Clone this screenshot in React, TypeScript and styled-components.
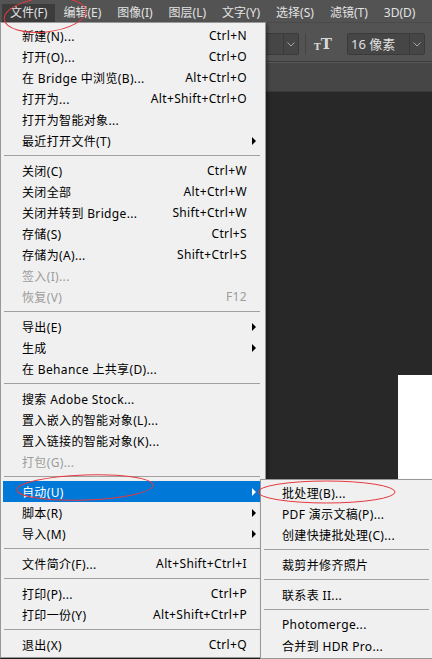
import React from "react";
import styled, { createGlobalStyle } from "styled-components";

const Global = createGlobalStyle`
  html, body { margin: 0; padding: 0; background: #282828; }
  #root { width: 432px; height: 659px; }
`;

const FONT = `"Segoe UI", "Noto Sans", "Noto Sans CJK SC", sans-serif`;

const Frame = styled.div`
  position: relative;
  width: 432px;
  height: 659px;
  overflow: hidden;
  display: flex;
  flex-direction: column;
  background: #282828;
  font-family: ${FONT};
`;

const MenuBar = styled.div`
  height: 22px;
  flex: none;
  background: #535353;
  display: flex;
  align-items: flex-end;
  padding-left: 2px;
  box-sizing: border-box;
`;

const BarItem = styled.div<{ $active?: boolean }>`
  height: 18px;
  padding: 0 8px;
  line-height: 18px;
  font-size: 12px;
  color: #e2e2e2;
  white-space: nowrap;
  background: ${(p) => (p.$active ? "#3c3c3c" : "transparent")};
`;

const Toolbar = styled.div`
  height: 40px;
  flex: none;
  box-sizing: border-box;
  background: #535353;
  border-top: 1px solid #4a4a4a;
  border-bottom: 1px solid #3a3a3a;
  display: flex;
  align-items: flex-start;
  padding: 10px 0 0 200px;
`;

const Select = styled.div<{ $w: number; $gap?: number }>`
  width: ${(p) => p.$w}px;
  margin-left: ${(p) => p.$gap ?? 0}px;
  height: 22px;
  box-sizing: border-box;
  flex: none;
  display: flex;
  background: #464646;
  border: 1px solid #3a3a3a;
  border-radius: 2px;
  color: #e0e0e0;
  font-size: 13px;
`;

const SelectValue = styled.div`
  flex: 1;
  padding-left: 3px;
  line-height: 20px;
  white-space: nowrap;
`;

const SelectArrow = styled.div`
  width: 14px;
  border-left: 1px solid #3a3a3a;
  display: flex;
  align-items: center;
  justify-content: center;
  color: #a8a8a8;
`;

const VSep = styled.div`
  width: 1px;
  height: 22px;
  margin-left: 6px;
  background: #434343;
  flex: none;
`;

const TextOrient = styled.div`
  margin-left: 6px;
  width: 22px;
  height: 22px;
  display: flex;
  align-items: flex-end;
  justify-content: center;
  padding-bottom: 3px;
  box-sizing: border-box;
  font-family: "DejaVu Serif", "Liberation Serif", serif;
  color: #d8d8d8;
  font-weight: bold;
  line-height: 1;
  flex: none;
`;

const Small = styled.span`
  font-size: 9px;
`;
const Big = styled.span`
  font-size: 15px;
`;

const Dots = styled.div`
  margin-left: 11px;
  margin-top: 5px;
  width: 2px;
  height: 12px;
  background: repeating-linear-gradient(#bdbdbd 0 2px, transparent 2px 4px);
  flex: none;
`;

const TabBar = styled.div`
  height: 30px;
  flex: none;
  box-sizing: border-box;
  background: #464646;
  border-top: 1px solid #5a5a5a;
  border-bottom: 1px solid #383838;
`;

const Canvas = styled.div`
  flex: 1;
  display: flex;
  justify-content: flex-end;
  align-items: flex-end;
`;

const Doc = styled.div`
  width: 34px;
  height: 284px;
  background: #ffffff;
`;

const Menu = styled.div<{ $left: number; $top: number; $width: number }>`
  position: absolute;
  left: ${(p) => p.$left}px;
  top: ${(p) => p.$top}px;
  width: ${(p) => p.$width}px;
  box-sizing: border-box;
  background: #f0f0f0;
  border: 1px solid #979797;
  padding: 2px 4px 2px 2px;
  box-shadow: 2px 2px 3px rgba(0, 0, 0, 0.35);
`;

const Row = styled.div<{ $active?: boolean; $disabled?: boolean }>`
  height: 21px;
  display: grid;
  grid-template-columns: 1fr auto 14px;
  align-items: center;
  padding-left: 19px;
  font-size: 12px;
  letter-spacing: 0.35px;
  white-space: nowrap;
  color: ${(p) => (p.$active ? "#ffffff" : p.$disabled ? "#9c9c9c" : "#000000")};
  background: ${(p) => (p.$active ? "#0078d7" : "transparent")};
`;

const Shortcut = styled.span`
  text-align: right;
`;

const Arrow = styled.span`
  justify-self: center;
  width: 0;
  height: 0;
  border-top: 4px solid transparent;
  border-bottom: 4px solid transparent;
  border-left: 4px solid currentColor;
`;

const Sep = styled.div`
  height: 9px;
  display: flex;
  align-items: center;
  padding: 0 1px;
  &::after {
    content: "";
    flex: 1;
    height: 1px;
    background: #a0a0a0;
  }
`;

const Overlay = styled.svg`
  position: absolute;
  left: 0;
  top: 0;
  pointer-events: none;
`;

type Item =
  | { sep: true }
  | { label: string; key?: string; sub?: boolean; disabled?: boolean; active?: boolean };

const fileMenu: Item[] = [
  { label: "新建(N)...", key: "Ctrl+N" },
  { label: "打开(O)...", key: "Ctrl+O" },
  { label: "在 Bridge 中浏览(B)...", key: "Alt+Ctrl+O" },
  { label: "打开为...", key: "Alt+Shift+Ctrl+O" },
  { label: "打开为智能对象..." },
  { label: "最近打开文件(T)", sub: true },
  { sep: true },
  { label: "关闭(C)", key: "Ctrl+W" },
  { label: "关闭全部", key: "Alt+Ctrl+W" },
  { label: "关闭并转到 Bridge...", key: "Shift+Ctrl+W" },
  { label: "存储(S)", key: "Ctrl+S" },
  { label: "存储为(A)...", key: "Shift+Ctrl+S" },
  { label: "签入(I)...", disabled: true },
  { label: "恢复(V)", key: "F12", disabled: true },
  { sep: true },
  { label: "导出(E)", sub: true },
  { label: "生成", sub: true },
  { label: "在 Behance 上共享(D)..." },
  { sep: true },
  { label: "搜索 Adobe Stock..." },
  { label: "置入嵌入的智能对象(L)..." },
  { label: "置入链接的智能对象(K)..." },
  { label: "打包(G)...", disabled: true },
  { sep: true },
  { label: "自动(U)", sub: true, active: true },
  { label: "脚本(R)", sub: true },
  { label: "导入(M)", sub: true },
  { sep: true },
  { label: "文件简介(F)...", key: "Alt+Shift+Ctrl+I" },
  { sep: true },
  { label: "打印(P)...", key: "Ctrl+P" },
  { label: "打印一份(Y)", key: "Alt+Shift+Ctrl+P" },
  { sep: true },
  { label: "退出(X)", key: "Ctrl+Q" },
];

const autoMenu: Item[] = [
  { label: "批处理(B)..." },
  { label: "PDF 演示文稿(P)..." },
  { label: "创建快捷批处理(C)..." },
  { sep: true },
  { label: "裁剪并修齐照片" },
  { sep: true },
  { label: "联系表 II..." },
  { sep: true },
  { label: "Photomerge..." },
  { label: "合并到 HDR Pro..." },
];

const barItems = ["文件(F)", "编辑(E)", "图像(I)", "图层(L)", "文字(Y)", "选择(S)", "滤镜(T)", "3D(D)"];

function MenuItems({ items }: { items: Item[] }) {
  return (
    <>
      {items.map((it, i) =>
        "sep" in it ? (
          <Sep key={i} />
        ) : (
          <Row key={i} $active={it.active} $disabled={it.disabled}>
            <span>{it.label}</span>
            <Shortcut>{it.key ?? ""}</Shortcut>
            {it.sub ? <Arrow /> : <span />}
          </Row>
        )
      )}
    </>
  );
}

const Chevron = () => (
  <svg width="8" height="5" viewBox="0 0 8 5">
    <polyline points="0.5,0.5 4,4 7.5,0.5" fill="none" stroke="currentColor" strokeWidth="1" />
  </svg>
);

export default function App() {
  return (
    <>
      <Global />
      <Frame>
        <MenuBar>
          {barItems.map((b, i) => (
            <BarItem key={b} $active={i === 0}>
              {b}
            </BarItem>
          ))}
        </MenuBar>
        <Toolbar>
          <Select $w={99}>
            <SelectValue />
            <SelectArrow>
              <Chevron />
            </SelectArrow>
          </Select>
          <VSep />
          <TextOrient>
            <Small>T</Small>
            <Big>T</Big>
          </TextOrient>
          <Select $w={78} $gap={13}>
            <SelectValue>16 像素</SelectValue>
            <SelectArrow>
              <Chevron />
            </SelectArrow>
          </Select>
          <Dots />
        </Toolbar>
        <TabBar />
        <Canvas>
          <Doc />
        </Canvas>

        <Menu $left={0} $top={22} $width={266}>
          <MenuItems items={fileMenu} />
        </Menu>
        <Menu $left={260} $top={479} $width={175}>
          <MenuItems items={autoMenu} />
        </Menu>

        <Overlay width="432" height="659" viewBox="0 0 432 659">
          <g fill="none" stroke="#e5383f" strokeWidth="1">
            <ellipse cx="45" cy="15" rx="41" ry="17" transform="rotate(-6 45 15)" />
            <ellipse cx="85" cy="487.5" rx="68" ry="12.5" transform="rotate(-2 85 487.5)" />
            <ellipse cx="326.5" cy="492" rx="68.5" ry="11" />
          </g>
        </Overlay>
      </Frame>
    </>
  );
}
